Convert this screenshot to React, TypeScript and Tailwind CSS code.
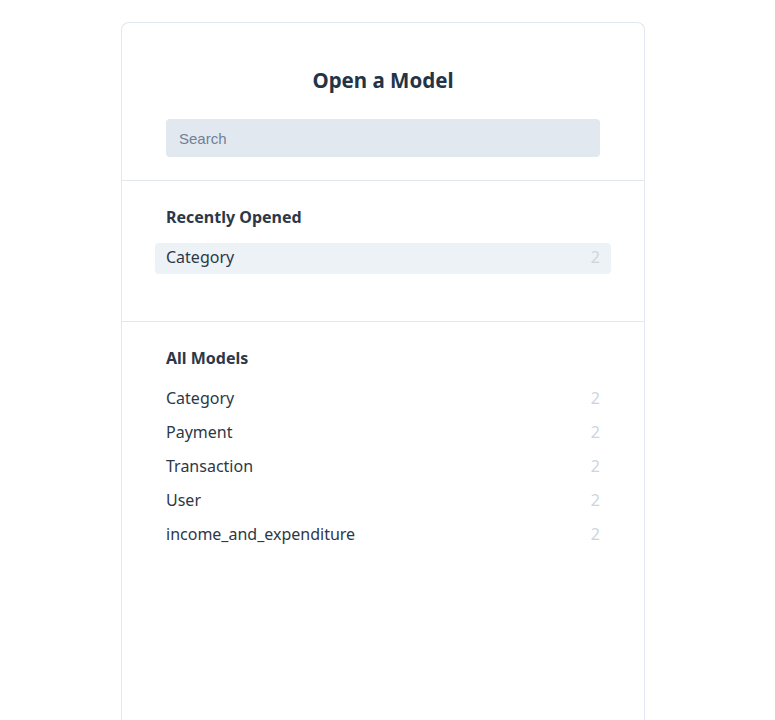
const recent = [{ name: "Category", count: 2 }]

const models = [
  { name: "Category", count: 2 },
  { name: "Payment", count: 2 },
  { name: "Transaction", count: 2 },
  { name: "User", count: 2 },
  { name: "income_and_expenditure", count: 2 },
]

function ModelRow({ name, count, active }: { name: string; count: number; active?: boolean }) {
  return (
    <div
      className={
        "-mx-[11px] flex items-center justify-between rounded px-[11px] text-[16px] text-[#2d3748] " +
        (active ? "h-[31px] bg-[#edf2f7] pb-[3px]" : "h-[34px] pb-[1px]")
      }
    >
      <span>{name}</span>
      <span className="text-[#cbd5e0]">{count}</span>
    </div>
  )
}

export default function App() {
  return (
    <div className="min-h-[720px] bg-white pt-[22px] font-['Noto_Sans',sans-serif]">
      <div className="ml-[121px] min-h-[720px] w-[524px] rounded-t-lg border border-b-0 border-[#e2e8f0] bg-white">
        <div className="border-b border-[#e2e8f0] px-[44px] pt-[43px] pb-[23px]">
          <h1 className="text-center text-[20.5px] leading-[28px] font-bold text-[#243447]">Open a Model</h1>
          <input
            type="text"
            placeholder="Search"
            className="mt-[25px] h-[38px] w-full rounded bg-[#e2e8f0] px-[13px] font-['Liberation_Sans',sans-serif] text-[15px] text-[#2d3748] placeholder:text-[#718096] outline-none"
          />
        </div>

        <div className="border-b border-[#e2e8f0] px-[44px] pt-[25px] pb-[47px]">
          <h2 className="text-[16px] leading-[22px] font-bold text-[#2d3748]">Recently Opened</h2>
          <div className="mt-[15px]">
            {recent.map((m) => (
              <ModelRow key={m.name} name={m.name} count={m.count} active />
            ))}
          </div>
        </div>

        <div className="px-[44px] pt-[25px]">
          <h2 className="text-[16px] leading-[22px] font-bold text-[#2d3748]">All Models</h2>
          <div className="mt-[12px]">
            {models.map((m) => (
              <ModelRow key={m.name} name={m.name} count={m.count} />
            ))}
          </div>
        </div>
      </div>
    </div>
  )
}
